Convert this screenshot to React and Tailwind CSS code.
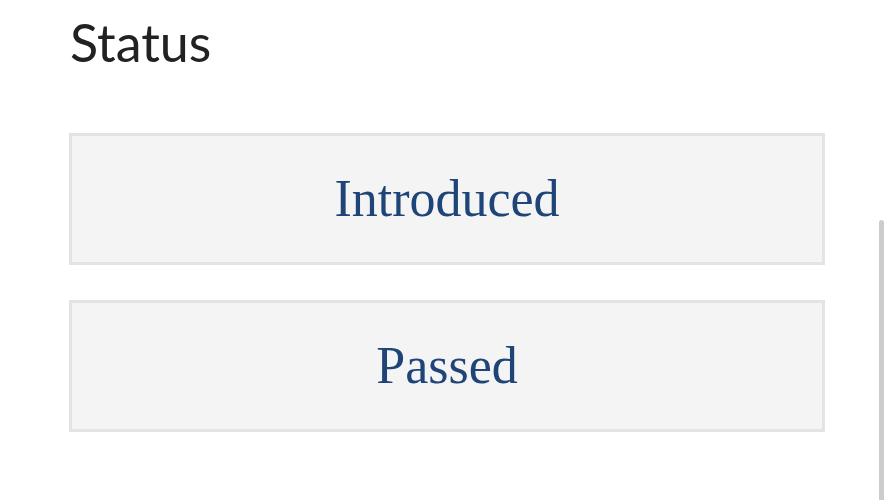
export default function App() {
  const statuses = ['Introduced', 'Passed']

  return (
    <div className="relative w-[894px] h-[500px] overflow-hidden bg-white">
      <div className="pl-[69px] pr-[69px] pt-[10px]">
        <h2 className="text-[52px] leading-[64px] text-[#222222] font-['Lato',sans-serif] ml-[1px]">Status</h2>

        <div className="mt-[59px] flex flex-col gap-[35px]">
          {statuses.map(s => (
            <button
              key={s}
              className="h-[132px] w-full bg-[#f4f4f4] border-[3px] border-[#e3e3e3] flex items-center justify-center text-[#1e4478] text-[52px] font-['Liberation_Serif',serif]"
            >
              {s}
            </button>
          ))}
        </div>
      </div>

      {/* scrollbar */}
      <div className="absolute left-[879px] top-[220px] w-[5px] h-[300px] rounded-full bg-[#cccccc]" />
    </div>
  )
}
